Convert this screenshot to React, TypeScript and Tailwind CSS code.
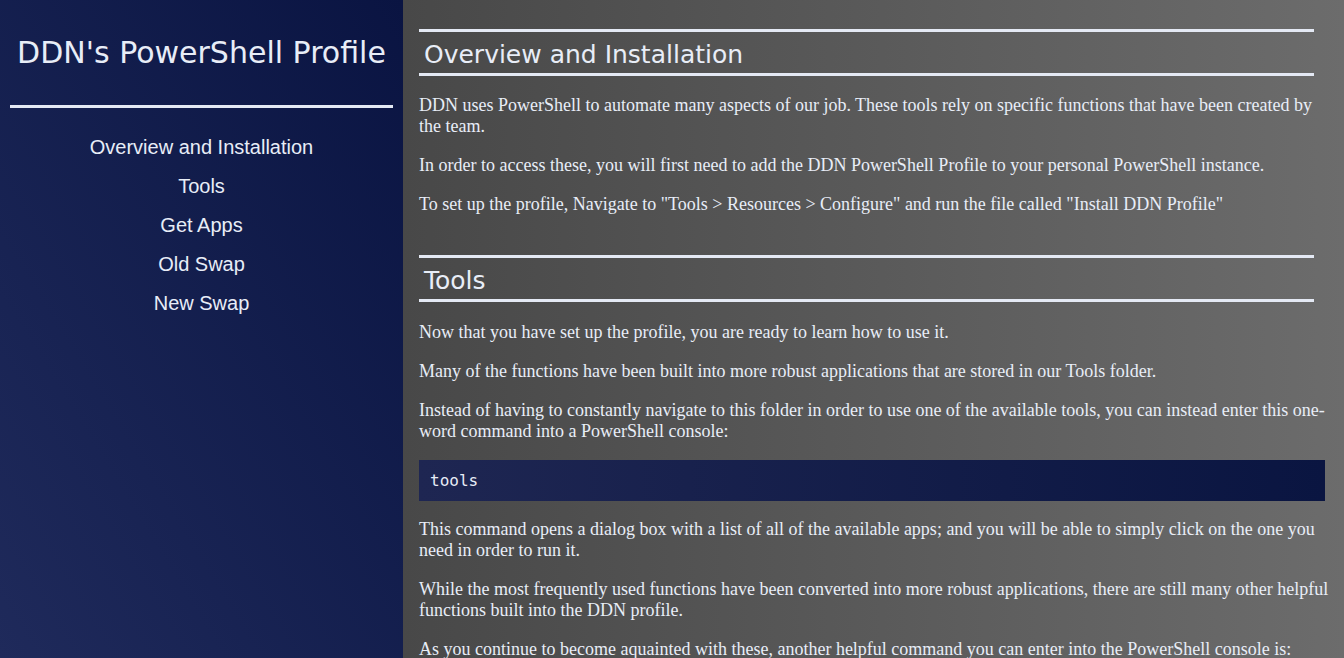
import React from "react";

const navItems = ["Overview and Installation", "Tools", "Get Apps", "Old Swap", "New Swap"];

function H2({ children, extra = "" }: { children: React.ReactNode; extra?: string }) {
  return (
    <h2
      className={
        "mr-[16px] border-y-[3px] border-[#e4e9f4] px-[5px] pt-[6px] pb-[2px] text-[25px] leading-[33px] text-[#e8edf7] [font-family:'DejaVu_Sans',Verdana,sans-serif] " +
        extra
      }
    >
      {children}
    </h2>
  );
}

function P({ children }: { children: React.ReactNode }) {
  return <p className="mr-[5px] my-[18px] text-[18px] leading-[21px]">{children}</p>;
}

export default function App() {
  return (
    <div className="flex h-[658px] w-[1344px] overflow-hidden">
      <aside className="w-[403px] shrink-0 bg-gradient-to-bl from-[#0a1442] to-[#1f2a5b] text-[#e8edf7]">
        <h1 className="pt-[33px] text-center text-[30px] leading-[40px] [font-family:'DejaVu_Sans',Verdana,sans-serif]">
          DDN's PowerShell Profile
        </h1>
        <div className="mx-[10px] mt-[32px] h-[3px] bg-[#e4e9f4]" />
        <nav className="mt-[28px] flex flex-col items-center gap-[16px] [font-family:'Liberation_Sans',Arial,sans-serif] text-[20px] leading-[23px]">
          {navItems.map((n) => (
            <a key={n} className="text-[#e8edf7]">
              {n}
            </a>
          ))}
        </nav>
      </aside>
      <main className="flex-1 bg-gradient-to-r from-[#484848] to-[#6c6c6c] pl-[16px] pr-[14px] pt-[29px] text-[#e8edf7] [font-family:'Liberation_Serif','Times_New_Roman',serif]">
        <H2 extra="mb-[19px]">Overview and Installation</H2>
        <P>
          DDN uses PowerShell to automate many aspects of our job. These tools rely on specific functions that have been
          created by the team.
        </P>
        <P>In order to access these, you will first need to add the DDN PowerShell Profile to your personal PowerShell instance.</P>
        <P>To set up the profile, Navigate to "Tools &gt; Resources &gt; Configure" and run the file called "Install DDN Profile"</P>
        <div className="h-[22px]" />
        <H2 extra="mb-[20px]">Tools</H2>
        <P>Now that you have set up the profile, you are ready to learn how to use it.</P>
        <P>Many of the functions have been built into more robust applications that are stored in our Tools folder.</P>
        <P>
          Instead of having to constantly navigate to this folder in order to use one of the available tools, you can instead
          enter this one-word command into a PowerShell console:
        </P>
        <pre className="mr-[5px] bg-gradient-to-r from-[#1e2652] to-[#0a1541] px-[11px] py-[10px] text-[16px] leading-[21px] text-[#e8edf7] [font-family:'DejaVu_Sans_Mono',Consolas,monospace]">
          tools
        </pre>
        <P>
          This command opens a dialog box with a list of all of the available apps; and you will be able to simply click on the
          one you need in order to run it.
        </P>
        <p className="my-[18px] text-[18px] leading-[21px]">
          While the most frequently used functions have been converted into more robust applications, there are still many other
          helpful functions built into the DDN profile.
        </p>
        <P>As you continue to become aquainted with these, another helpful command you can enter into the PowerShell console is:</P>
      </main>
    </div>
  );
}
